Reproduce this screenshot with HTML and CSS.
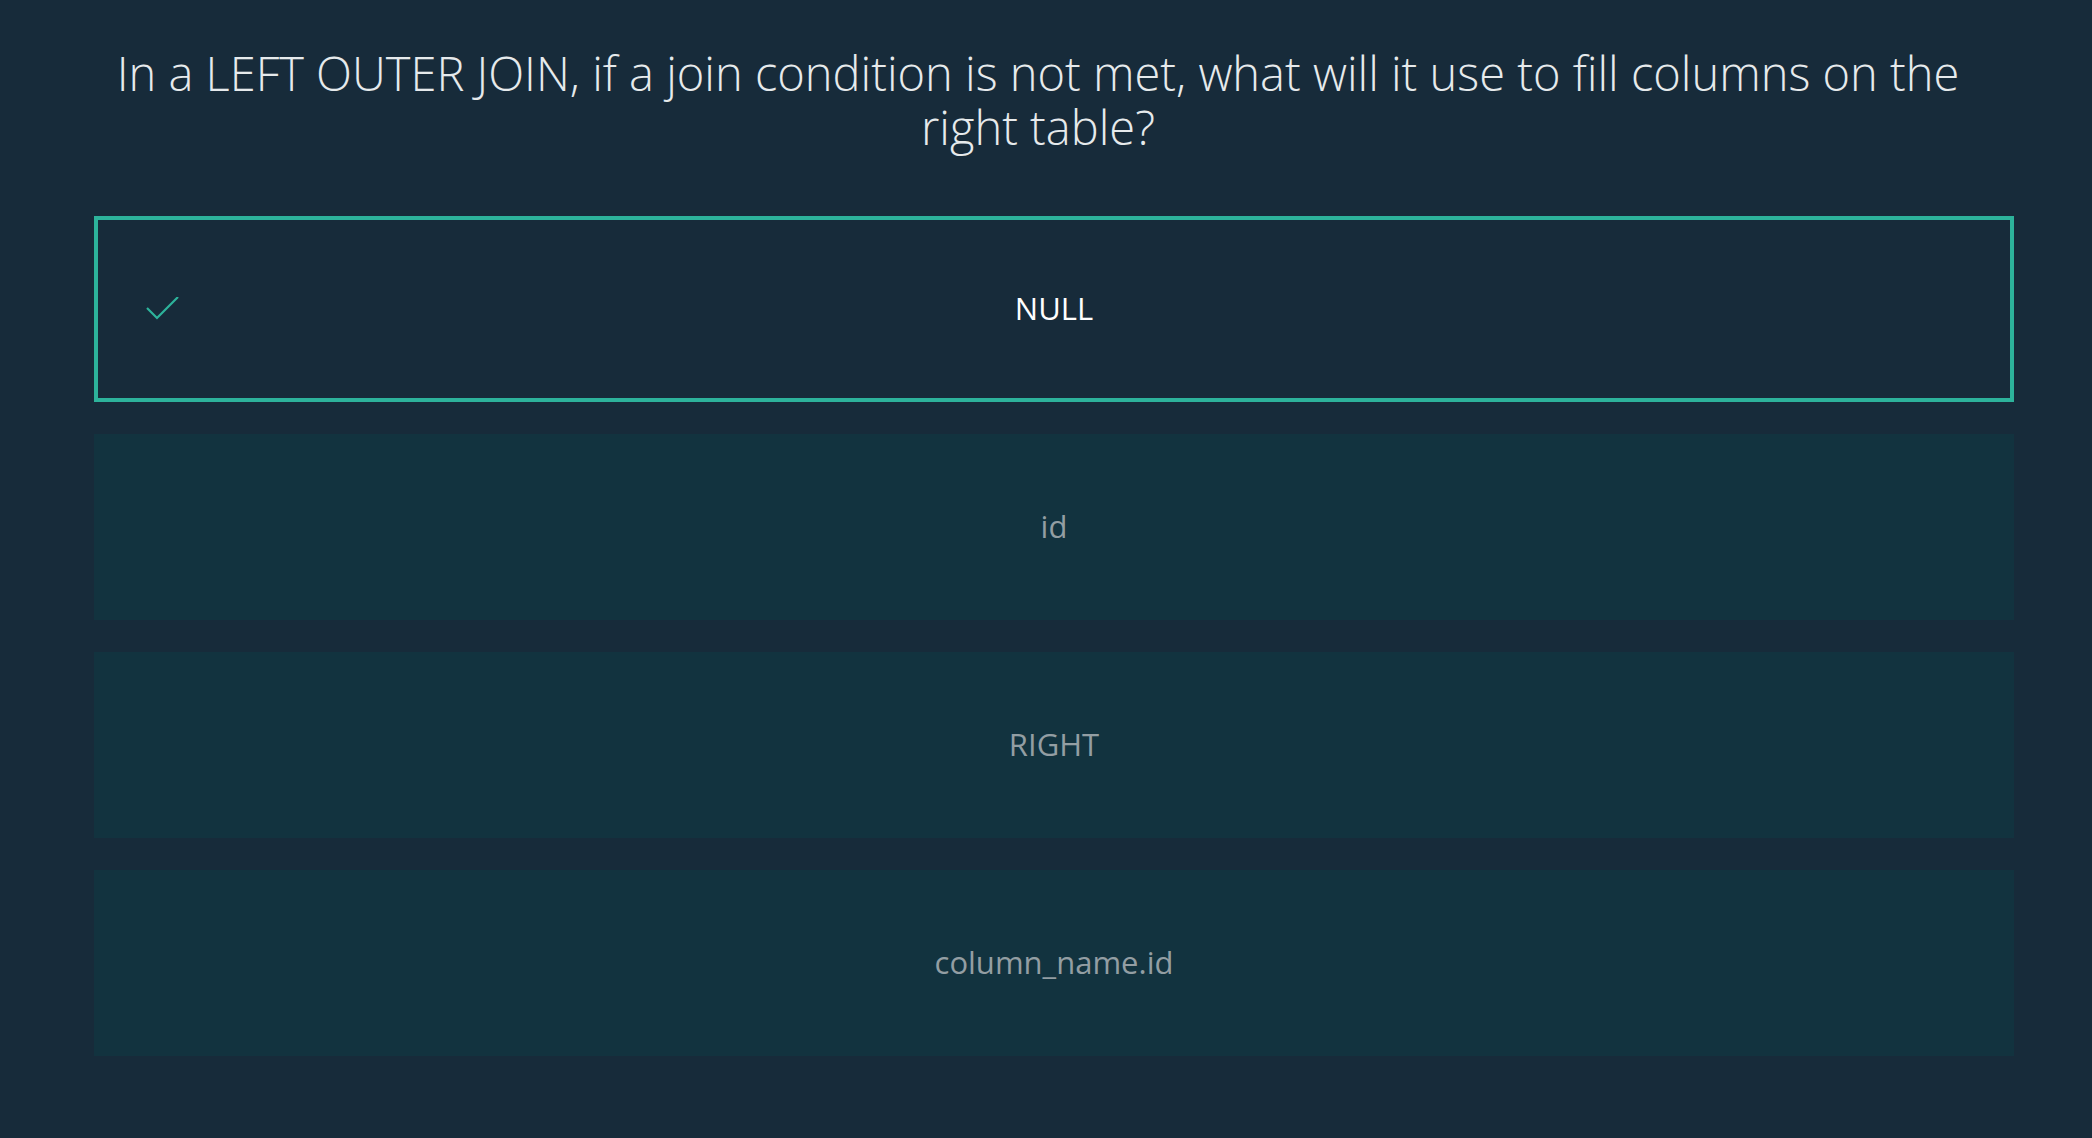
FILE: index.html
```html
<!DOCTYPE html>
<html lang="en">
<head>
<meta charset="utf-8">
<title>Quiz</title>
<link rel="stylesheet" href="styles.css">
</head>
<body>
<main class="quiz">
  <h1 class="question">In a LEFT OUTER JOIN, if a join condition is not met, what will it use to fill columns on the right table?</h1>
  <ul class="options">
    <li class="option selected">
      <svg class="check" width="34" height="24" viewBox="0 0 34 24" aria-hidden="true"><polyline points="1,11 11,21 32,0" fill="none" stroke="#2db39b" stroke-width="2.2"/></svg>
      <span class="label">NULL</span>
    </li>
    <li class="option"><span class="label">id</span></li>
    <li class="option"><span class="label">RIGHT</span></li>
    <li class="option"><span class="label">column_name.id</span></li>
  </ul>
</main>
</body>
</html>
```
FILE: styles.css
```css
html, body {
  margin: 0;
  padding: 0;
  background: #172b3a;
  height: 100%;
}
.quiz {
  padding: 46px 0 0 94px;
  width: 1920px;
  font-family: "Open Sans", "Noto Sans", sans-serif;
}
.question {
  margin: 0 0 62px 0;
  padding-right: 32px;
  font-size: 47px;
  font-weight: 300;
  line-height: 54px;
  color: #e6eaec;
  text-align: center;
}
.options {
  list-style: none;
  margin: 0;
  padding: 0;
  display: flex;
  flex-direction: column;
  gap: 32px;
}
.option {
  position: relative;
  box-sizing: border-box;
  height: 186px;
  padding-bottom: 3px;
  background: #12333f;
  display: flex;
  align-items: center;
  justify-content: center;
}
.option.selected {
  background: #172b3a;
  border: 4px solid #2db39b;
}
.label {
  font-size: 31px;
  font-weight: 400;
  color: #939ea3;
}
.selected .label {
  color: #ffffff;
}
.check {
  position: absolute;
  left: 48px;
  top: 77px;
}
```
